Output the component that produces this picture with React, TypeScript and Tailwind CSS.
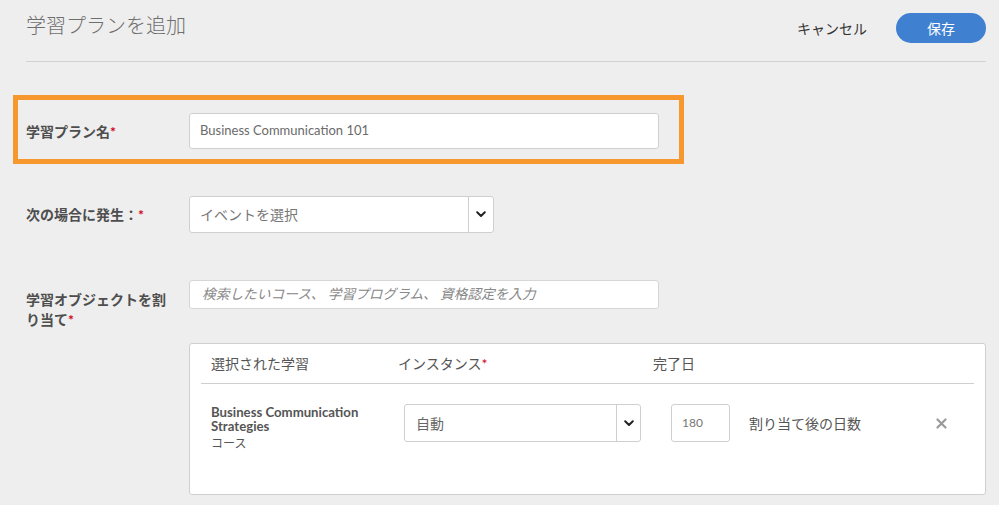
import React from "react";

const font = { fontFamily: '"Lato", "Noto Sans CJK JP", sans-serif' };

function Chevron() {
  return (
    <svg width="10" height="7" viewBox="0 0 10 7" className="block">
      <path d="M1.2 1.3 L5 5 L8.8 1.3" fill="none" stroke="#222" strokeWidth="2" strokeLinecap="round" strokeLinejoin="round" />
    </svg>
  );
}

function Star() {
  return <span className="text-[#d0021b]">*</span>;
}

export default function App() {
  return (
    <div
      className="w-[999px] h-[505px] overflow-hidden bg-[#eeeeee] pl-[26px] pr-[13px] text-[#555]"
      style={font}
    >
      {/* Header */}
      <div className="flex items-center justify-between pt-[13px] pb-[18px] border-b border-[#d2d2d2]">
        <div className="text-[20px] leading-[30px] text-[#6e6e6e] font-light -mt-[6px]">学習プランを追加</div>
        <div className="flex items-center">
          <button className="text-[14px] text-[#333] mr-[29px]">キャンセル</button>
          <button className="w-[90px] h-[30px] rounded-full bg-[#3f80d1] text-white text-[14px]">保存</button>
        </div>
      </div>

      {/* Highlighted plan name row */}
      <div className="mt-[33px] -ml-[13px] w-[671px] h-[69px] border-[5px] border-[#f7982f] pl-[8px] pt-[13px] flex items-start">
        <div className="w-[163px] h-[36px] flex items-center text-[14px] font-bold text-[#4e4e4e]">
          学習プラン名<Star />
        </div>
        <div className="w-[470px] h-[36px] bg-white border border-[#cfcfcf] rounded-[3px] flex items-center pl-[10px] text-[13px] text-[#6a6a6a]">
          Business Communication 101
        </div>
      </div>

      {/* Event row */}
      <div className="mt-[32px] flex items-start">
        <div className="w-[163px] h-[37px] flex items-center text-[14px] font-bold text-[#4e4e4e]">
          次の場合に発生：<Star />
        </div>
        <div className="w-[305px] h-[37px] bg-white border border-[#cfcfcf] rounded-[3px] flex items-center">
          <div className="flex-1 pl-[10px] text-[14px] text-[#777]">イベントを選択</div>
          <div className="w-[25px] h-full border-l border-[#cfcfcf] flex items-center justify-center">
            <Chevron />
          </div>
        </div>
      </div>

      {/* Learning objects row */}
      <div className="mt-[47px] flex items-start">
        <div className="w-[163px] pr-[14px] pt-[10px] text-[14px] leading-[20px] font-bold text-[#4e4e4e] flex flex-col">
          <span>学習オブジェクトを割</span>
          <span>
            り当て<Star />
          </span>
        </div>
        <div className="flex flex-col">
          <div className="w-[470px] h-[29px] bg-white border border-[#d6d6d6] rounded-[3px] flex items-center pl-[12px] text-[13.7px] italic text-[#888]">
            検索したいコース、 学習プログラム、 資格認定を入力
          </div>
          <div className="mt-[34px] w-[797px] h-[152px] bg-white border border-[#cfcfcf] rounded-[3px] px-[11px]">
            <div className="h-[40px] border-b border-[#cfcfcf] flex items-center text-[14px] text-[#555]">
              <div className="w-[197px] pl-[10px]">選択された学習</div>
              <div className="w-[255px]">インスタンス<Star /></div>
              <div>完了日</div>
            </div>
            <div className="flex items-start pt-[20px]">
              <div className="w-[203px] pl-[10px] pt-[1px]">
                <div className="text-[13.2px] leading-[14px] font-bold text-[#555]">
                  Business Communication Strategies
                </div>
                <div className="text-[12px] leading-[20px] text-[#555] mt-[1px]">コース</div>
              </div>
              <div className="w-[237px] h-[38px] bg-white border border-[#cfcfcf] rounded-[3px] flex items-center">
                <div className="flex-1 pl-[11px] text-[14px] text-[#666]">自動</div>
                <div className="w-[24px] h-full border-l border-[#cfcfcf] flex items-center justify-center">
                  <Chevron />
                </div>
              </div>
              <div className="ml-[30px] w-[59px] h-[38px] border border-[#cfcfcf] rounded-[3px] flex items-center pl-[10px] text-[12px] text-[#777]">
                180
              </div>
              <div className="ml-[19px] h-[38px] flex items-center text-[14px] text-[#555] w-[187px]">
                割り当て後の日数
              </div>
              <div className="h-[38px] flex items-center text-[#999]">
                <svg width="11" height="11" viewBox="0 0 11 11">
                  <path d="M1.5 1.5 L9.5 9.5 M9.5 1.5 L1.5 9.5" stroke="#9a9a9a" strokeWidth="2.2" strokeLinecap="round" />
                </svg>
              </div>
            </div>
          </div>
        </div>
      </div>
    </div>
  );
}
